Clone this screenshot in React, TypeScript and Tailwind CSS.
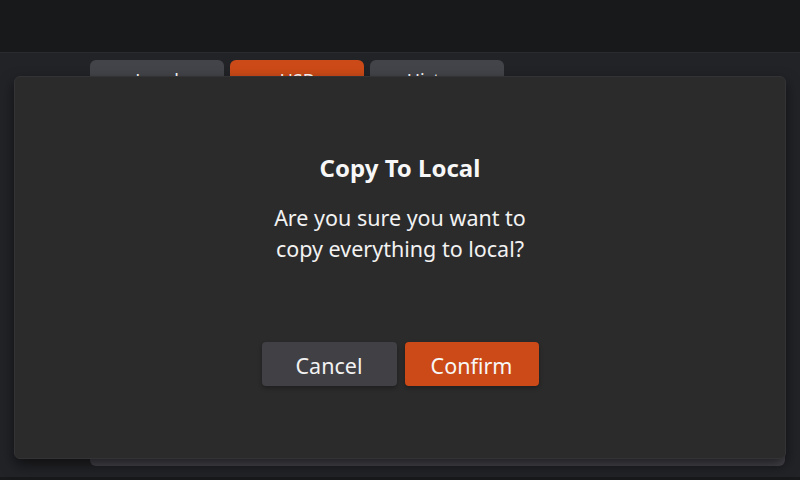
export default function App() {
  return (
    <div
      className="relative w-[800px] h-[480px] overflow-hidden bg-[#222327] text-white"
      style={{ fontFamily: '"Noto Sans", "Open Sans", sans-serif' }}
    >
      {/* Top bar */}
      <div className="h-[53px] bg-[#18191b] border-b border-[#2a2b2f]" />

      {/* Tabs + panel */}
      <div className="pl-[90px] pr-[15px] pt-[7px]">
        <div className="flex gap-[6px]">
          <div className="w-[134px] h-[40px] rounded-t-[6px] bg-[#434449] flex items-center justify-center text-[18px]">Local</div>
          <div className="w-[134px] h-[40px] rounded-t-[6px] bg-[#cc4a17] flex items-center justify-center text-[18px]">USB</div>
          <div className="w-[134px] h-[40px] rounded-t-[6px] bg-[#434449] flex items-center justify-center text-[18px]">History</div>
        </div>
        <div className="h-[366px] rounded-b-[6px] rounded-tr-[6px] bg-[#46464d]" />
      </div>

      {/* Bottom strip */}
      <div className="absolute left-0 right-0 bottom-0 h-[3px] bg-[#18191b]" />

      {/* Modal */}
      <div className="absolute left-[14px] top-[76px] w-[772px] h-[383px] rounded-[6px] bg-[#2b2b2b] border border-[#333335] shadow-[0_6px_14px_rgba(0,0,0,0.55)] flex flex-col items-center">
        <h2 className="mt-[75px] text-[24px] font-bold leading-[32px] text-[#f7f7f7]">Copy To Local</h2>
        <p className="mt-[18px] text-[21.5px] leading-[31px] text-center text-[#f2f2f2]">
          Are you sure you want to
          <br />
          copy everything to local?
        </p>
        <div className="mt-[78px] flex gap-[8px]">
          <button className="w-[135px] h-[44px] pt-[4px] rounded-[4px] bg-[#404045] text-[21.5px] text-[#f2f2f2] shadow-[0_2px_4px_rgba(0,0,0,0.3)]">Cancel</button>
          <button className="w-[134px] h-[44px] pt-[4px] rounded-[4px] bg-[#cc4a17] text-[21.5px] text-[#f7f7f7] shadow-[0_2px_4px_rgba(0,0,0,0.3)]">Confirm</button>
        </div>
      </div>
    </div>
  );
}
